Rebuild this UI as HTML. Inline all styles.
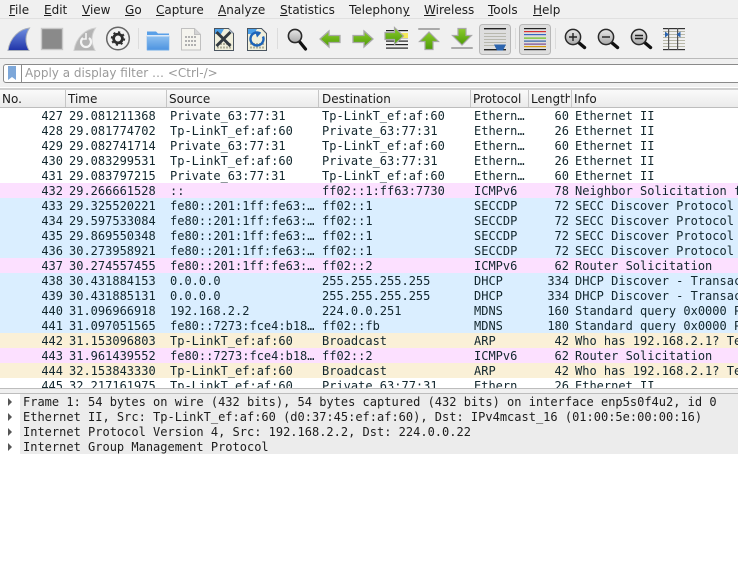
<!DOCTYPE html>
<html><head><meta charset="utf-8">
<style>
html,body{margin:0;padding:0;background:#fff}
#p{position:relative;width:738px;height:574px;overflow:hidden;background:#fff;font-family:"DejaVu Sans",sans-serif;font-size:12px;color:#1c1c1c}
.m{position:absolute;top:3px;line-height:15px;white-space:nowrap}
.m u{text-decoration:underline}
#menu{position:absolute;left:0;top:0;width:738px;height:19px;background:#f0f0f0}
#tb{position:absolute;left:0;top:18px;width:738px;height:41px;background:#f0f0f0;border-bottom:1px solid #bababa;border-top:1px solid #e0e0e0;box-sizing:border-box}
#tb2{position:absolute;left:0;top:0}
#fb{position:absolute;left:0;top:59px;width:738px;height:28px;background:#f0f0f0}
#inp{position:absolute;left:3px;top:64px;width:760px;height:19px;border:1px solid #8a8a8a;border-radius:3px;box-sizing:border-box;background:#fff}
#ph{position:absolute;left:25px;top:66px;line-height:15px;color:#9a9a9a;white-space:nowrap}
#hd{position:absolute;left:0;top:88px;width:738px;height:20px;background:linear-gradient(#fafafa,#ebebeb);border-top:2px solid #cfcfcf;border-bottom:1px solid #bdbdbd;box-sizing:border-box}
.h{position:absolute;top:90px;height:17px;line-height:18px;white-space:nowrap;overflow:hidden}
.v{position:absolute;top:90px;width:1px;height:17px;background:#c6c6c6}
#tbl{position:absolute;left:0;top:108px;width:738px;height:280px;overflow:hidden;font-family:"DejaVu Sans Mono",monospace;color:#12272e}
.r{position:absolute;left:0;width:738px;height:15px;line-height:15px;white-space:pre}
.r span{position:absolute;top:1px;white-space:pre}
.n{width:63px;left:0;text-align:right}
.t{left:69px}.s{left:170px}.d{left:322px}.o{left:474px}
.l{width:569px;left:0;text-align:right}
.i{left:575px}
.w{background:#fff}.p{background:#fce0ff}.b{background:#daeeff}.a{background:#faf0d7}
#sp{position:absolute;left:0;top:388px;width:738px;height:6px;background:#f0f0f0;border-top:1px solid #bdbdbd;border-bottom:1px solid #bdbdbd;box-sizing:border-box}
#dt{position:absolute;left:20px;top:394px;width:718px;height:60px;background:#ececec}
.q{position:absolute;left:23px;line-height:15px;font-family:"DejaVu Sans Mono",monospace;color:#1c1c1c;white-space:pre}
.ar{position:absolute;left:8px;width:0;height:0;border-left:4px solid #555;border-top:4px solid transparent;border-bottom:4px solid transparent}
</style></head><body><div id="p">
<div id="menu"></div>
<div id="tb"></div>
<div class="m" style="left:9px"><u>F</u>ile</div>
<div class="m" style="left:44px"><u>E</u>dit</div>
<div class="m" style="left:82px"><u>V</u>iew</div>
<div class="m" style="left:125px"><u>G</u>o</div>
<div class="m" style="left:156px"><u>C</u>apture</div>
<div class="m" style="left:218px"><u>A</u>nalyze</div>
<div class="m" style="left:280px"><u>S</u>tatistics</div>
<div class="m" style="left:349px">Telephon<u>y</u></div>
<div class="m" style="left:424px"><u>W</u>ireless</div>
<div class="m" style="left:488px"><u>T</u>ools</div>
<div class="m" style="left:533px"><u>H</u>elp</div>
<svg id="tb2" width="738" height="60" viewBox="0 0 738 60">
<defs>
<linearGradient id="fin" x1="0" y1="0" x2="0" y2="1"><stop offset="0" stop-color="#6f8fe0"/><stop offset="1" stop-color="#1f33a8"/></linearGradient>
<linearGradient id="fold" x1="0" y1="0" x2="0" y2="1"><stop offset="0" stop-color="#8ec0f0"/><stop offset="1" stop-color="#4d93e0"/></linearGradient>
<linearGradient id="gl" x1="0" y1="0" x2="0" y2="1"><stop offset="0" stop-color="#e8e8e8"/><stop offset="1" stop-color="#a8a8a8"/></linearGradient>
<linearGradient id="gr" x1="0" y1="0" x2="0" y2="1"><stop offset="0" stop-color="#8ccc2c"/><stop offset="1" stop-color="#4c9a06"/></linearGradient>
</defs>
<g fill="#dcdcdc"><rect x="138" y="28" width="1" height="21"/><rect x="277" y="28" width="1" height="21"/><rect x="515" y="28" width="1" height="21"/><rect x="555" y="28" width="1" height="21"/></g>
<path d="M29.500 28C20 29 10 37 8 50.500L29 50.500C25 43 25 35 29.500 28Z" fill="url(#fin)" stroke="#aab0ba" stroke-width="1"/>
<rect x="41.500" y="28.500" width="21" height="21" fill="#8a8a8a" stroke="#c8c8c8" stroke-width="1.400"/>
<path d="M95.500 28C86 29 76 37 74 50.500L95 50.500C91 43 91 35 95.500 28Z" fill="#b4b4b4" stroke="#d0d0d0" stroke-width="1"/>
<path d="M83 38a5 5 0 1 0 6 0" fill="none" stroke="#f4f4f4" stroke-width="2.200"/><path d="M86 33v6h-4" fill="none" stroke="#f4f4f4" stroke-width="1.600"/>
<circle cx="118" cy="38.500" r="11.300" fill="#f2f2f2" stroke="#666" stroke-width="1.500"/>
<circle cx="118" cy="38.500" r="4.400" fill="none" stroke="#2c2c2c" stroke-width="2.800"/>
<circle cx="118" cy="38.500" r="6.400" fill="none" stroke="#2c2c2c" stroke-width="1.600" stroke-dasharray="2.200 2.800"/>
<path d="M147 31.500h9l2 2h11v17h-22Z" fill="#5aa0e8"/><rect x="147" y="36" width="22" height="14" fill="url(#fold)" stroke="#7cb2ea" stroke-width=".6"/><rect x="147" y="35" width="22" height="1.500" fill="#dbe9f8"/>
<path d="M181.500 28.500h13l6 6v15.500h-19Z" fill="#f5f4ee" stroke="#c0c0c0"/><path d="M194.500 28.500v6h6" fill="#d4d4d4" stroke="#c0c0c0"/>
<g stroke="#b0b0b0" stroke-width="2" stroke-dasharray="2 1" fill="none"><path d="M185 37h12M185 41h12M185 45h12"/></g>
<path d="M214.500 28.500h14l5 5v17h-19Z" fill="#f0efdc" stroke="#4a5560"/><path d="M215 29h9l-3 5h-6Z" fill="#4a9fe8"/><path d="M229 29l4 4h-4Z" fill="#bcd"/>
<g stroke="#b0b09a" stroke-width="2" stroke-dasharray="2 1"><path d="M217 44h14M217 47.500h14"/></g>
<path d="M216.500 32l14 14M230.500 32l-14 14" stroke="#333b42" stroke-width="3"/>
<path d="M247.500 28.500h14l5 5v17h-19Z" fill="#f0efdc" stroke="#4a5560"/><path d="M248 29h9l-3 5h-6Z" fill="#4a9fe8"/>
<g stroke="#b0b09a" stroke-width="2" stroke-dasharray="2 1"><path d="M250 44h14M250 47.500h14"/></g>
<path d="M260.500 33.500a6.500 6.500 0 1 0 2.500 3" fill="none" stroke="#1d64b8" stroke-width="2.400"/><path d="M255 31l5.500 2.500-3.500 4Z" fill="#1d64b8"/>
<path d="M299 41l6.500 8" stroke="#111" stroke-width="3.200" stroke-linecap="round"/><circle cx="295" cy="36" r="6.600" fill="url(#gl)" stroke="#2a2a2a" stroke-width="1.600"/>
<path d="M320 39l9-8v4.500h11v7h-11v4.500Z" fill="url(#gr)" stroke="#a8a8a8" stroke-width="1.300"/>
<path d="M373 39l-9-8v4.500h-11v7h11v4.500Z" fill="url(#gr)" stroke="#a8a8a8" stroke-width="1.300"/>
<g fill="#222"><rect x="386" y="30" width="22" height="1.200"/><rect x="386" y="33.500" width="22" height="1.200"/><rect x="386" y="37" width="22" height="1.200"/><rect x="386" y="40.500" width="22" height="1.200"/><rect x="386" y="44" width="22" height="1.200"/><rect x="386" y="47.500" width="22" height="1.200"/></g>
<rect x="400" y="33" width="8" height="5" fill="#f4e95a"/>
<path d="M385 32.500h9.500v-5l9 8.500-9 8.500v-5H385Z" fill="url(#gr)" stroke="#a8a8a8" stroke-width="1.200"/>
<rect x="418" y="28" width="22" height="2" rx="1" fill="#aaa"/>
<path d="M429 32l-9.500 9.500h5.500v8h8v-8h5.500Z" fill="url(#gr)" stroke="#a8a8a8" stroke-width="1.200"/>
<rect x="451" y="47" width="22" height="2" rx="1" fill="#aaa"/>
<path d="M462 45l-9.500-9.500h5.500v-7h8v7h5.500Z" fill="url(#gr)" stroke="#a8a8a8" stroke-width="1.200"/>
<rect x="479.500" y="24.500" width="31" height="30" rx="3" fill="#dedede" stroke="#b8b8b8"/>
<g fill="#b8b8ae"><rect x="484" y="33" width="22" height="1"/><rect x="484" y="36" width="22" height="1"/><rect x="484" y="39" width="22" height="1"/><rect x="484" y="42" width="22" height="1"/><rect x="484" y="45" width="22" height="1"/></g>
<rect x="484" y="28" width="22" height="1.400" fill="#222"/><rect x="484" y="49" width="22" height="1.400" fill="#222"/>
<path d="M494 44.500h12l-3 6h-6Z" fill="#2c64ae"/>
<rect x="519.500" y="24.500" width="31" height="30" rx="3" fill="#dedede" stroke="#b8b8b8"/>
<rect x="524" y="28" width="22" height="1.200" fill="#222"/><rect x="524" y="31" width="22" height="1.200" fill="#d83030"/><rect x="524" y="34" width="22" height="1.200" fill="#3a66c0"/><rect x="524" y="37.500" width="22" height="1.200" fill="#6cc018"/><rect x="524" y="40.500" width="22" height="1.200" fill="#3060a8"/><rect x="524" y="43.500" width="22" height="1.200" fill="#7a4a90"/><rect x="524" y="46" width="22" height="1.200" fill="#d89a10"/><rect x="524" y="49" width="22" height="1.200" fill="#222"/>
<g>
<path d="M578 42l6.500 5.500" stroke="#111" stroke-width="3.400" stroke-linecap="round"/><circle cx="573" cy="37" r="7.600" fill="url(#gl)" stroke="#2a2a2a" stroke-width="1.500"/><path d="M569 37h8M573 33v8" stroke="#222" stroke-width="1.400"/>
<path d="M611 42l6.500 5.500" stroke="#111" stroke-width="3.400" stroke-linecap="round"/><circle cx="606" cy="37" r="7.600" fill="url(#gl)" stroke="#2a2a2a" stroke-width="1.500"/><path d="M602 37h8" stroke="#222" stroke-width="1.400"/>
<path d="M644 42l6.500 5.500" stroke="#111" stroke-width="3.400" stroke-linecap="round"/><circle cx="639" cy="37" r="7.600" fill="url(#gl)" stroke="#2a2a2a" stroke-width="1.500"/><path d="M635 35.500h8M635 38.500h8" stroke="#222" stroke-width="1.400"/>
</g>
<g fill="#b8b8a8"><rect x="663" y="31" width="22" height="1"/><rect x="663" y="34" width="22" height="1"/><rect x="663" y="37" width="22" height="1"/><rect x="663" y="40" width="22" height="1"/><rect x="663" y="43" width="22" height="1"/><rect x="663" y="46" width="22" height="1"/></g>
<rect x="663" y="28" width="22" height="1.200" fill="#333"/><rect x="663" y="49" width="22" height="1.200" fill="#333"/>
<rect x="668" y="28" width="1.200" height="22" fill="#555"/><rect x="677" y="28" width="1.200" height="22" fill="#555"/>
<path d="M665 31.500l4 3-4 3ZM680.500 31.500l-4 3 4 3Z" fill="#2c64ae"/>
</svg>
<div id="fb"></div>
<div id="inp"></div>
<div style="position:absolute;left:21px;top:65px;width:1px;height:17px;background:#8a8a8a"></div>
<svg style="position:absolute;left:7px;top:66px" width="10" height="15"><path d="M1 0h8v14l-4-3-4 3Z" fill="#7da7d9"/></svg>
<div id="ph">Apply a display filter … &lt;Ctrl-/&gt;</div>
<div id="hd"></div>
<div class="h" style="left:2px;width:62px">No.</div>
<div class="h" style="left:68px;width:97px">Time</div>
<div class="h" style="left:169px;width:148px">Source</div>
<div class="h" style="left:322px;width:147px">Destination</div>
<div class="h" style="left:473px;width:54px">Protocol</div>
<div class="h" style="left:531px;width:39px">Length</div>
<div class="h" style="left:574px;width:100px">Info</div>
<div class="v" style="left:65px"></div><div class="v" style="left:166px"></div><div class="v" style="left:318px"></div><div class="v" style="left:470px"></div><div class="v" style="left:528px"></div><div class="v" style="left:571px"></div>
<div id="tbl">
<div class="r w" style="top:0"><span class="n">427</span><span class="t">29.081211368</span><span class="s">Private_63:77:31</span><span class="d">Tp-LinkT_ef:af:60</span><span class="o">Ethern…</span><span class="l">60</span><span class="i">Ethernet II</span></div>
<div class="r w" style="top:15px"><span class="n">428</span><span class="t">29.081774702</span><span class="s">Tp-LinkT_ef:af:60</span><span class="d">Private_63:77:31</span><span class="o">Ethern…</span><span class="l">26</span><span class="i">Ethernet II</span></div>
<div class="r w" style="top:30px"><span class="n">429</span><span class="t">29.082741714</span><span class="s">Private_63:77:31</span><span class="d">Tp-LinkT_ef:af:60</span><span class="o">Ethern…</span><span class="l">60</span><span class="i">Ethernet II</span></div>
<div class="r w" style="top:45px"><span class="n">430</span><span class="t">29.083299531</span><span class="s">Tp-LinkT_ef:af:60</span><span class="d">Private_63:77:31</span><span class="o">Ethern…</span><span class="l">26</span><span class="i">Ethernet II</span></div>
<div class="r w" style="top:60px"><span class="n">431</span><span class="t">29.083797215</span><span class="s">Private_63:77:31</span><span class="d">Tp-LinkT_ef:af:60</span><span class="o">Ethern…</span><span class="l">60</span><span class="i">Ethernet II</span></div>
<div class="r p" style="top:75px"><span class="n">432</span><span class="t">29.266661528</span><span class="s">::</span><span class="d">ff02::1:ff63:7730</span><span class="o">ICMPv6</span><span class="l">78</span><span class="i">Neighbor Solicitation for</span></div>
<div class="r b" style="top:90px"><span class="n">433</span><span class="t">29.325520221</span><span class="s">fe80::201:1ff:fe63:…</span><span class="d">ff02::1</span><span class="o">SECCDP</span><span class="l">72</span><span class="i">SECC Discover Protocol Req</span></div>
<div class="r b" style="top:105px"><span class="n">434</span><span class="t">29.597533084</span><span class="s">fe80::201:1ff:fe63:…</span><span class="d">ff02::1</span><span class="o">SECCDP</span><span class="l">72</span><span class="i">SECC Discover Protocol Req</span></div>
<div class="r b" style="top:120px"><span class="n">435</span><span class="t">29.869550348</span><span class="s">fe80::201:1ff:fe63:…</span><span class="d">ff02::1</span><span class="o">SECCDP</span><span class="l">72</span><span class="i">SECC Discover Protocol Req</span></div>
<div class="r b" style="top:135px"><span class="n">436</span><span class="t">30.273958921</span><span class="s">fe80::201:1ff:fe63:…</span><span class="d">ff02::1</span><span class="o">SECCDP</span><span class="l">72</span><span class="i">SECC Discover Protocol Req</span></div>
<div class="r p" style="top:150px"><span class="n">437</span><span class="t">30.274557455</span><span class="s">fe80::201:1ff:fe63:…</span><span class="d">ff02::2</span><span class="o">ICMPv6</span><span class="l">62</span><span class="i">Router Solicitation</span></div>
<div class="r b" style="top:165px"><span class="n">438</span><span class="t">30.431884153</span><span class="s">0.0.0.0</span><span class="d">255.255.255.255</span><span class="o">DHCP</span><span class="l">334</span><span class="i">DHCP Discover - Transaction</span></div>
<div class="r b" style="top:180px"><span class="n">439</span><span class="t">30.431885131</span><span class="s">0.0.0.0</span><span class="d">255.255.255.255</span><span class="o">DHCP</span><span class="l">334</span><span class="i">DHCP Discover - Transaction</span></div>
<div class="r b" style="top:195px"><span class="n">440</span><span class="t">31.096966918</span><span class="s">192.168.2.2</span><span class="d">224.0.0.251</span><span class="o">MDNS</span><span class="l">160</span><span class="i">Standard query 0x0000 PTR</span></div>
<div class="r b" style="top:210px"><span class="n">441</span><span class="t">31.097051565</span><span class="s">fe80::7273:fce4:b18…</span><span class="d">ff02::fb</span><span class="o">MDNS</span><span class="l">180</span><span class="i">Standard query 0x0000 PTR</span></div>
<div class="r a" style="top:225px"><span class="n">442</span><span class="t">31.153096803</span><span class="s">Tp-LinkT_ef:af:60</span><span class="d">Broadcast</span><span class="o">ARP</span><span class="l">42</span><span class="i">Who has 192.168.2.1? Tell</span></div>
<div class="r p" style="top:240px"><span class="n">443</span><span class="t">31.961439552</span><span class="s">fe80::7273:fce4:b18…</span><span class="d">ff02::2</span><span class="o">ICMPv6</span><span class="l">62</span><span class="i">Router Solicitation</span></div>
<div class="r a" style="top:255px"><span class="n">444</span><span class="t">32.153843330</span><span class="s">Tp-LinkT_ef:af:60</span><span class="d">Broadcast</span><span class="o">ARP</span><span class="l">42</span><span class="i">Who has 192.168.2.1? Tell</span></div>
<div class="r w" style="top:270px"><span class="n">445</span><span class="t">32.217161975</span><span class="s">Tp-LinkT_ef:af:60</span><span class="d">Private_63:77:31</span><span class="o">Ethern…</span><span class="l">26</span><span class="i">Ethernet II</span></div>
</div>
<div id="sp"></div>
<div id="dt"></div>
<div class="ar" style="top:398px"></div><div class="q" style="top:395px">Frame 1: 54 bytes on wire (432 bits), 54 bytes captured (432 bits) on interface enp5s0f4u2, id 0</div>
<div class="ar" style="top:413px"></div><div class="q" style="top:410px">Ethernet II, Src: Tp-LinkT_ef:af:60 (d0:37:45:ef:af:60), Dst: IPv4mcast_16 (01:00:5e:00:00:16)</div>
<div class="ar" style="top:428px"></div><div class="q" style="top:425px">Internet Protocol Version 4, Src: 192.168.2.2, Dst: 224.0.0.22</div>
<div class="ar" style="top:443px"></div><div class="q" style="top:440px">Internet Group Management Protocol</div>
</div></body></html>
